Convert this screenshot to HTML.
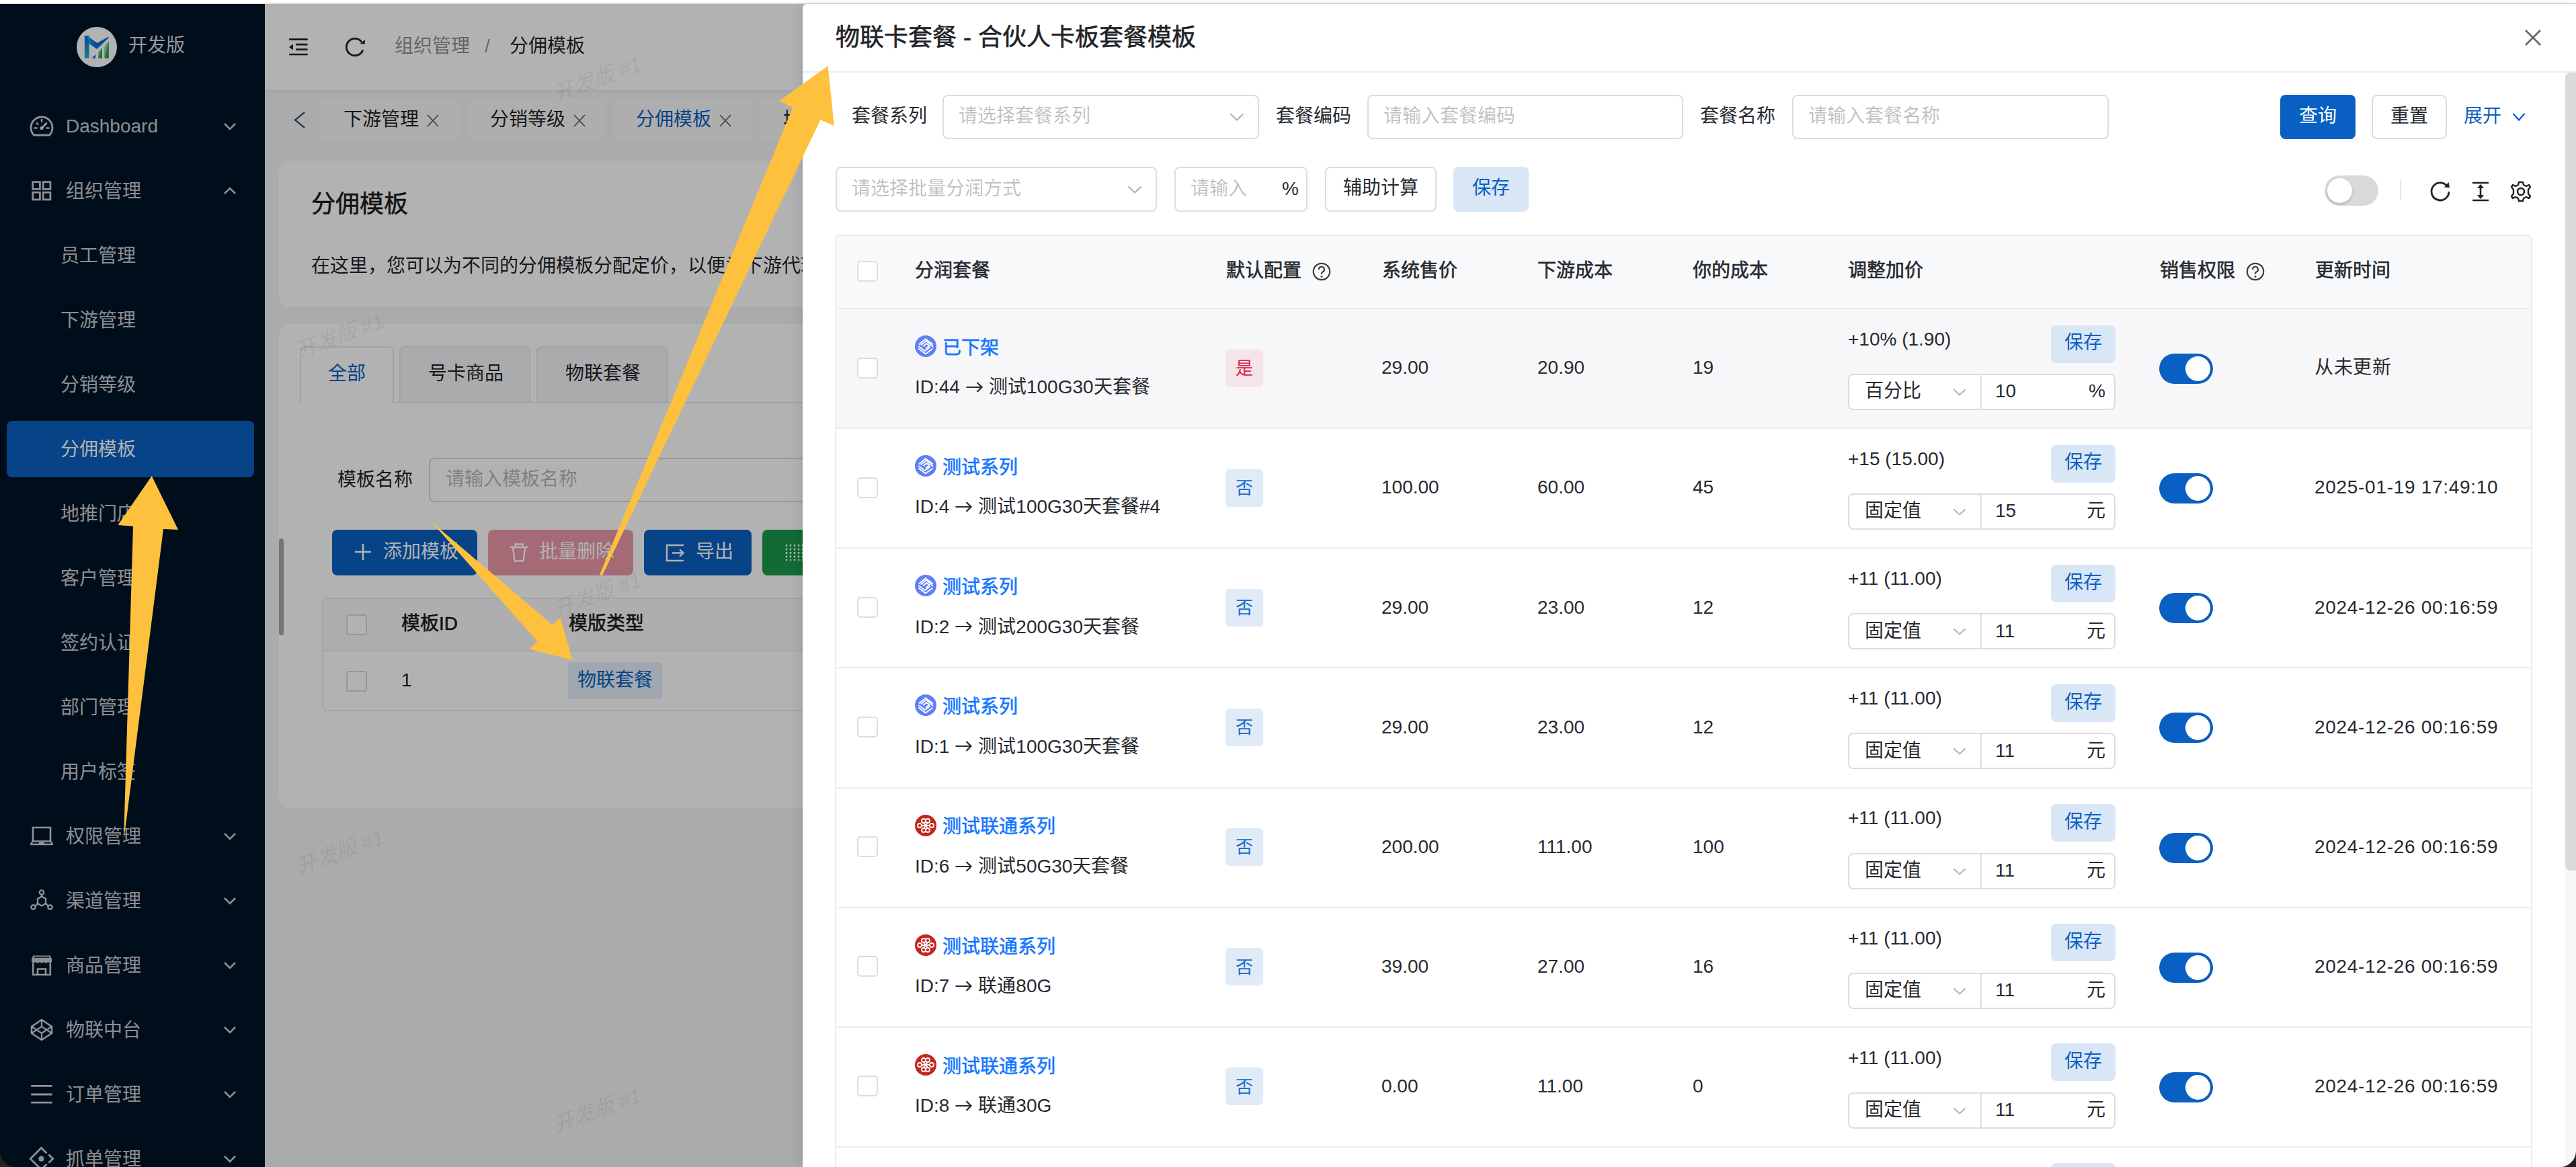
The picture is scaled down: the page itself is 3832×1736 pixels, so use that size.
<!DOCTYPE html><html lang="zh-CN"><head><meta charset="utf-8"><style>
html,body{margin:0;padding:0}
body{width:3832px;height:1736px;overflow:hidden;position:relative;background:#fff;font-family:"Liberation Sans",sans-serif}
.t{position:absolute;white-space:nowrap}
.r{position:absolute;box-sizing:border-box}
svg{position:absolute;overflow:visible}
</style></head><body>
<div class="r" style="left:0px;top:0px;width:3832px;height:4px;background:#ffffff;"></div>
<div class="r" style="left:0px;top:4px;width:3832px;height:2px;background:#e4e5e3;"></div>
<div class="r" style="left:0px;top:6px;width:394px;height:1730px;background:#001529;"></div>
<svg style="left:114px;top:40px" width="60" height="60" viewBox="0 0 60 60"><defs><linearGradient id="lg1" x1="0" y1="0" x2="0" y2="1"><stop offset="0" stop-color="#0e6ad8"/><stop offset="1" stop-color="#12b8e0"/></linearGradient><linearGradient id="lg2" x1="0" y1="0" x2="1" y2="0"><stop offset="0" stop-color="#12b0e0"/><stop offset="0.35" stop-color="#0e70dc"/><stop offset="1" stop-color="#0e6ad8"/></linearGradient></defs><circle cx="30" cy="30" r="30" fill="#ffffff"/><rect x="11.9" y="13.1" width="6.6" height="33.6" rx="0.8" fill="url(#lg1)"/><path d="M15.5 13.1 L30.5 24 L48 14.2 L47.2 16.8 L30 33 L18.5 24.8 Z" fill="url(#lg2)"/><path d="M22.7 46.4 L28.1 41 L28.1 46.4 Z" fill="#0e6ad8"/><path d="M32 46.7 V38 L38 31 V46.7 Z" fill="#3a9a5e"/><path d="M32 38 L38 31 L32 46.7 Z" fill="#8ad48a"/><path d="M41.6 46.7 V30 L47.9 21.2 V46.7 Z" fill="#3a9a5e"/><path d="M41.6 30 L47.9 21.2 L41.6 46.7 Z" fill="#8ad48a"/></svg>
<div class="t" style="left:191px;top:48.3px;font-size:28px;line-height:39px;color:rgba(255,255,255,0.85);font-weight:400;">开发版</div>
<div class="r" style="left:10px;top:626px;width:368px;height:84px;background:#0a60c2;border-radius:8px"></div>
<svg style="left:44px;top:170px" width="36" height="36" viewBox="0 0 36 36"><path d="M6.4 31 A16 16 0 1 1 29.6 31 Z" fill="none" stroke="rgba(255,255,255,0.8)" stroke-width="2.8" stroke-linejoin="round"/><path d="M18 20.5 L24 14.5" stroke="rgba(255,255,255,0.8)" stroke-width="2.6" stroke-linecap="round"/><circle cx="18" cy="20.5" r="2.6" fill="rgba(255,255,255,0.8)"/><path d="M18 8v3M7.5 20.5h3M25.5 20.5h3M10.8 13.2l1.8 1.8M25.2 13.2l-1.8 1.8" stroke="rgba(255,255,255,0.8)" stroke-width="2.4" stroke-linecap="round"/></svg>
<div class="t" style="left:98px;top:168.3px;font-size:28px;line-height:39px;color:rgba(255,255,255,0.8);font-weight:400;">Dashboard</div>
<svg style="left:332px;top:182px" width="20" height="12" viewBox="0 0 20 12"><path d="M2 2 L10 10 L18 2" fill="none" stroke="rgba(255,255,255,0.8)" stroke-width="2.5"/></svg>
<svg style="left:44px;top:266px" width="36" height="36" viewBox="0 0 36 36"><rect x="4.7" y="4.7" width="10.7" height="10.7" fill="none" stroke="rgba(255,255,255,0.8)" stroke-width="2.8"/><rect x="20.2" y="4.7" width="10.7" height="10.7" fill="none" stroke="rgba(255,255,255,0.8)" stroke-width="2.8"/><rect x="4.7" y="20.2" width="10.7" height="10.7" fill="none" stroke="rgba(255,255,255,0.8)" stroke-width="2.8"/><rect x="20.2" y="20.2" width="10.7" height="10.7" fill="none" stroke="rgba(255,255,255,0.8)" stroke-width="2.8"/></svg>
<div class="t" style="left:98px;top:265.3px;font-size:28px;line-height:39px;color:rgba(255,255,255,0.8);font-weight:400;">组织管理</div>
<svg style="left:332px;top:278px" width="20" height="12" viewBox="0 0 20 12"><path d="M2 10 L10 2 L18 10" fill="none" stroke="rgba(255,255,255,0.8)" stroke-width="2.5"/></svg>
<div class="t" style="left:90px;top:361.3px;font-size:28px;line-height:39px;color:rgba(255,255,255,0.8);font-weight:400;">员工管理</div>
<div class="t" style="left:90px;top:457.3px;font-size:28px;line-height:39px;color:rgba(255,255,255,0.8);font-weight:400;">下游管理</div>
<div class="t" style="left:90px;top:553.3px;font-size:28px;line-height:39px;color:rgba(255,255,255,0.8);font-weight:400;">分销等级</div>
<div class="t" style="left:90px;top:649.3px;font-size:28px;line-height:39px;color:#fff;font-weight:400;">分佣模板</div>
<div class="t" style="left:90px;top:745.3px;font-size:28px;line-height:39px;color:rgba(255,255,255,0.8);font-weight:400;">地推门店</div>
<div class="t" style="left:90px;top:841.3px;font-size:28px;line-height:39px;color:rgba(255,255,255,0.8);font-weight:400;">客户管理</div>
<div class="t" style="left:90px;top:937.3px;font-size:28px;line-height:39px;color:rgba(255,255,255,0.8);font-weight:400;">签约认证</div>
<div class="t" style="left:90px;top:1033.3px;font-size:28px;line-height:39px;color:rgba(255,255,255,0.8);font-weight:400;">部门管理</div>
<div class="t" style="left:90px;top:1129.3px;font-size:28px;line-height:39px;color:rgba(255,255,255,0.8);font-weight:400;">用户标签</div>
<svg style="left:44px;top:1226px" width="36" height="36" viewBox="0 0 36 36"><path d="M5 25 V5 H31 V25" fill="none" stroke="rgba(255,255,255,0.8)" stroke-width="2.6"/><path d="M2 30 L4.5 25.5 H31.5 L34 30 Z" fill="none" stroke="rgba(255,255,255,0.8)" stroke-width="2.4" stroke-linejoin="round"/><path d="M14 28 h8" stroke="rgba(255,255,255,0.8)" stroke-width="2"/></svg>
<div class="t" style="left:98px;top:1225.3px;font-size:28px;line-height:39px;color:rgba(255,255,255,0.8);font-weight:400;">权限管理</div>
<svg style="left:332px;top:1238px" width="20" height="12" viewBox="0 0 20 12"><path d="M2 2 L10 10 L18 2" fill="none" stroke="rgba(255,255,255,0.8)" stroke-width="2.5"/></svg>
<svg style="left:44px;top:1322px" width="36" height="36" viewBox="0 0 36 36"><circle cx="18" cy="5.5" r="3.2" fill="none" stroke="rgba(255,255,255,0.8)" stroke-width="2.3"/><circle cx="5.5" cy="27.5" r="3.2" fill="none" stroke="rgba(255,255,255,0.8)" stroke-width="2.3"/><circle cx="30.5" cy="27.5" r="3.2" fill="none" stroke="rgba(255,255,255,0.8)" stroke-width="2.3"/><path d="M18 11.5 L24 15 V22 L18 25.5 L12 22 V15 Z" fill="none" stroke="rgba(255,255,255,0.8)" stroke-width="2.3"/><path d="M18 8.7 V11.5 M8.3 25.8 L12 22 M27.7 25.8 L24 22" stroke="rgba(255,255,255,0.8)" stroke-width="2.3"/></svg>
<div class="t" style="left:98px;top:1321.3px;font-size:28px;line-height:39px;color:rgba(255,255,255,0.8);font-weight:400;">渠道管理</div>
<svg style="left:332px;top:1334px" width="20" height="12" viewBox="0 0 20 12"><path d="M2 2 L10 10 L18 2" fill="none" stroke="rgba(255,255,255,0.8)" stroke-width="2.5"/></svg>
<svg style="left:44px;top:1418px" width="36" height="36" viewBox="0 0 36 36"><path d="M5 3.5 H31 L33 9 V13 Q30.5 16 27.5 13 Q24 16 21 13 Q18 16 15 13 Q12 16 8.5 13 Q5.5 16 3 13 V9 Z" fill="rgba(255,255,255,0.8)"/><path d="M5.2 15 V32 H30.8 V15" fill="none" stroke="rgba(255,255,255,0.8)" stroke-width="2.6"/><path d="M12 32 V23.5 H24 V32" fill="none" stroke="rgba(255,255,255,0.8)" stroke-width="2.6"/><path d="M6.5 6 H29.5" stroke="#001529" stroke-width="1.6"/></svg>
<div class="t" style="left:98px;top:1417.3px;font-size:28px;line-height:39px;color:rgba(255,255,255,0.8);font-weight:400;">商品管理</div>
<svg style="left:332px;top:1430px" width="20" height="12" viewBox="0 0 20 12"><path d="M2 2 L10 10 L18 2" fill="none" stroke="rgba(255,255,255,0.8)" stroke-width="2.5"/></svg>
<svg style="left:44px;top:1514px" width="36" height="36" viewBox="0 0 36 36"><path d="M18 3 L33 13 V23 L18 33 L3 23 V13 Z" fill="none" stroke="rgba(255,255,255,0.8)" stroke-width="2.6" stroke-linejoin="round"/><path d="M3 13 L18 23 L33 13 M3 23 L18 13 L33 23 M18 3 V13 M18 23 V33" fill="none" stroke="rgba(255,255,255,0.8)" stroke-width="2.2"/></svg>
<div class="t" style="left:98px;top:1513.3px;font-size:28px;line-height:39px;color:rgba(255,255,255,0.8);font-weight:400;">物联中台</div>
<svg style="left:332px;top:1526px" width="20" height="12" viewBox="0 0 20 12"><path d="M2 2 L10 10 L18 2" fill="none" stroke="rgba(255,255,255,0.8)" stroke-width="2.5"/></svg>
<svg style="left:44px;top:1610px" width="36" height="36" viewBox="0 0 36 36"><path d="M2.2 5.4 H33.6 M2.2 18 H33.6 M2.2 30.1 H33.6" stroke="rgba(255,255,255,0.8)" stroke-width="2.8"/></svg>
<div class="t" style="left:98px;top:1609.3px;font-size:28px;line-height:39px;color:rgba(255,255,255,0.8);font-weight:400;">订单管理</div>
<svg style="left:332px;top:1622px" width="20" height="12" viewBox="0 0 20 12"><path d="M2 2 L10 10 L18 2" fill="none" stroke="rgba(255,255,255,0.8)" stroke-width="2.5"/></svg>
<svg style="left:44px;top:1706px" width="36" height="36" viewBox="0 0 36 36"><path d="M25.5 9.6 L17.4 1.5 L1.2 17.7 L17.4 33.9 L25.5 25.8 M28.5 11.6 L34.6 17.7 L28.5 23.8" fill="none" stroke="rgba(255,255,255,0.8)" stroke-width="2.8" stroke-linejoin="miter"/><circle cx="17.4" cy="17.7" r="4" fill="rgba(255,255,255,0.8)"/></svg>
<div class="t" style="left:98px;top:1705.3px;font-size:28px;line-height:39px;color:rgba(255,255,255,0.8);font-weight:400;">抓单管理</div>
<svg style="left:332px;top:1718px" width="20" height="12" viewBox="0 0 20 12"><path d="M2 2 L10 10 L18 2" fill="none" stroke="rgba(255,255,255,0.8)" stroke-width="2.5"/></svg>
<div class="r" style="left:394px;top:6px;width:3438px;height:1730px;background:#f4f5f8;"></div>
<div class="r" style="left:394px;top:6px;width:3438px;height:128px;background:#ffffff;box-shadow:0 1px 4px rgba(0,21,41,0.08)"></div>
<svg style="left:429px;top:57px" width="30" height="26" viewBox="0 0 30 26"><path d="M1.1 1.7 H28.8 M11.3 9.2 H28.5 M11.3 16.7 H28.5 M1.1 24 H28.8" stroke="#1f2126" stroke-width="2.7"/><path d="M1 13 L7 8.6 V17.4 Z" fill="#1f2126"/></svg>
<svg style="left:513px;top:55px" width="30" height="30" viewBox="0 0 30 30"><path d="M26.4 20.3 A12.6 12.6 0 1 1 24.5 6.8" fill="none" stroke="#1f2126" stroke-width="2.8" stroke-linecap="round"/><path d="M29.8 4.2 V10.8 L22.8 9.8 Z" fill="#1f2126"/></svg>
<div class="t" style="left:587px;top:49.3px;font-size:28px;line-height:39px;color:rgba(0,0,0,0.45);font-weight:400;">组织管理</div>
<div class="t" style="left:721px;top:49.3px;font-size:28px;line-height:39px;color:rgba(0,0,0,0.45);font-weight:400;">/</div>
<div class="t" style="left:758px;top:49.3px;font-size:28px;line-height:39px;color:rgba(0,0,0,0.88);font-weight:400;">分佣模板</div>
<svg style="left:437px;top:166px" width="18" height="25" viewBox="0 0 18 25"><path d="M16 1 L2 12.5 L16 24" fill="none" stroke="#2b3a55" stroke-width="2.1"/></svg>
<div class="r" style="left:478px;top:146px;width:205px;height:64px;background:#fafafa;border-radius:12px"></div>
<div class="t" style="left:511px;top:158.3px;font-size:28px;line-height:39px;color:rgba(0,0,0,0.88);font-weight:400;">下游管理</div>
<svg style="left:635px;top:170px" width="18" height="19" viewBox="0 0 18 19"><path d="M1 1 L17 18 M17 1 L1 18" stroke="#5a6270" stroke-width="1.8"/></svg>
<div class="r" style="left:696px;top:146px;width:205px;height:64px;background:#fafafa;border-radius:12px"></div>
<div class="t" style="left:729px;top:158.3px;font-size:28px;line-height:39px;color:rgba(0,0,0,0.88);font-weight:400;">分销等级</div>
<svg style="left:853px;top:170px" width="18" height="19" viewBox="0 0 18 19"><path d="M1 1 L17 18 M17 1 L1 18" stroke="#5a6270" stroke-width="1.8"/></svg>
<div class="r" style="left:913px;top:146px;width:206px;height:64px;background:#fafafa;border-radius:12px"></div>
<div class="t" style="left:946px;top:158.3px;font-size:28px;line-height:39px;color:#0a60c2;font-weight:400;">分佣模板</div>
<svg style="left:1070px;top:170px" width="18" height="19" viewBox="0 0 18 19"><path d="M1 1 L17 18 M17 1 L1 18" stroke="#5a6270" stroke-width="1.8"/></svg>
<div class="r" style="left:1132px;top:146px;width:206px;height:64px;background:#fafafa;border-radius:12px"></div>
<div class="t" style="left:1165px;top:158.3px;font-size:28px;line-height:39px;color:rgba(0,0,0,0.88);font-weight:400;">地推门店</div>
<svg style="left:1289px;top:170px" width="18" height="19" viewBox="0 0 18 19"><path d="M1 1 L17 18 M17 1 L1 18" stroke="#5a6270" stroke-width="1.8"/></svg>
<div class="r" style="left:415px;top:239px;width:3400px;height:218px;background:#ffffff;border-radius:16px"></div>
<div class="t" style="left:463px;top:278.8px;font-size:36px;line-height:50px;color:rgba(0,0,0,0.88);font-weight:400;;-webkit-text-stroke:0.6px rgba(0,0,0,0.88)">分佣模板</div>
<div class="t" style="left:463px;top:375.8px;font-size:28px;line-height:39px;color:rgba(0,0,0,0.88);font-weight:400;">在这里，您可以为不同的分佣模板分配定价，以便为下游代理商设置不同的价格。</div>
<div class="r" style="left:415px;top:482px;width:3400px;height:720px;background:#ffffff;border-radius:16px"></div>
<div class="r" style="left:446px;top:598px;width:3330px;height:2px;background:#e6e8ee;"></div>
<div class="r" style="left:446px;top:515px;width:140px;height:85px;background:#ffffff;border:2px solid #e6e8ee;border-bottom:none;border-radius:8px 8px 0 0"></div>
<div class="t" style="left:488px;top:536.3px;font-size:28px;line-height:39px;color:#0a60c2;font-weight:400;">全部</div>
<div class="r" style="left:594px;top:515px;width:195px;height:83px;background:#f4f5f8;border:2px solid #e6e8ee;border-bottom:none;border-radius:8px 8px 0 0"></div>
<div class="t" style="left:637px;top:536.3px;font-size:28px;line-height:39px;color:rgba(0,0,0,0.88);font-weight:400;">号卡商品</div>
<div class="r" style="left:798px;top:515px;width:195px;height:83px;background:#f4f5f8;border:2px solid #e6e8ee;border-bottom:none;border-radius:8px 8px 0 0"></div>
<div class="t" style="left:841px;top:536.3px;font-size:28px;line-height:39px;color:rgba(0,0,0,0.88);font-weight:400;">物联套餐</div>
<div class="t" style="left:502px;top:694.3px;font-size:28px;line-height:39px;color:rgba(0,0,0,0.88);font-weight:400;">模板名称</div>
<div class="r" style="left:638px;top:681px;width:800px;height:66px;background:#fff;border:2px solid #d9d9d9;border-radius:8px"></div>
<div class="t" style="left:663px;top:693.3px;font-size:28px;line-height:39px;color:rgba(0,0,0,0.3);font-weight:400;">请输入模板名称</div>
<div class="r" style="left:494px;top:788px;width:216px;height:68px;background:#0a60c2;border-radius:8px"></div>
<svg style="left:527px;top:808px" width="26" height="26" viewBox="0 0 26 26"><path d="M13 1 V25 M1 13 H25" stroke="#fff" stroke-width="2.6"/></svg>
<div class="t" style="left:570px;top:801.3px;font-size:28px;line-height:39px;color:#fff;font-weight:400;">添加模板</div>
<div class="r" style="left:726px;top:788px;width:216px;height:68px;background:#eb9aa9;border-radius:8px"></div>
<svg style="left:756px;top:807px" width="32" height="30" viewBox="0 0 32 30"><path d="M2.5 7 H29.5 M10.5 7 V2.5 H21.5 V7 M7 7 L9.5 27.5 H22.5 L25 7" fill="none" stroke="#fff" stroke-width="2.4" stroke-linejoin="round"/></svg>
<div class="t" style="left:802px;top:801.3px;font-size:28px;line-height:39px;color:#fff;font-weight:400;">批量删除</div>
<div class="r" style="left:958px;top:788px;width:160px;height:68px;background:#0a60c2;border-radius:8px"></div>
<svg style="left:990px;top:809px" width="30" height="27" viewBox="0 0 30 27"><path d="M27 2 H2 V25 H27 M10 13.5 H26 M21 8.5 L26.5 13.5 L21 18.5" fill="none" stroke="#fff" stroke-width="2.4"/></svg>
<div class="t" style="left:1035px;top:801.3px;font-size:28px;line-height:39px;color:#fff;font-weight:400;">导出</div>
<div class="r" style="left:1134px;top:788px;width:200px;height:68px;background:#1a9a4c;border-radius:8px"></div>
<svg style="left:1167px;top:807px" width="30" height="30" viewBox="0 0 30 30"><path d="M3 3 V27 M9 3 V27 M15 3 V27 M21 3 V27 M27 3 V27" stroke="#fff" stroke-width="2.4" stroke-dasharray="3 2.5"/></svg>
<div class="r" style="left:479px;top:889px;width:3300px;height:169px;background:#fff;border:2px solid #ececec;border-radius:8px"></div>
<div class="r" style="left:481px;top:891px;width:3296px;height:77px;background:#fafafa;border-radius:6px 6px 0 0"></div>
<div class="r" style="left:479px;top:967px;width:3300px;height:2px;background:#ececec;"></div>
<div class="r" style="left:515px;top:914px;width:31px;height:31px;background:#fff;border:2px solid #d9d9d9;border-radius:4px"></div>
<div class="r" style="left:515px;top:998px;width:31px;height:31px;background:#fff;border:2px solid #d9d9d9;border-radius:4px"></div>
<div class="t" style="left:597px;top:908.3px;font-size:28px;line-height:39px;color:rgba(0,0,0,0.88);font-weight:400;;-webkit-text-stroke:0.6px rgba(0,0,0,0.88)">模板ID</div>
<div class="t" style="left:846px;top:908.3px;font-size:28px;line-height:39px;color:rgba(0,0,0,0.88);font-weight:400;;-webkit-text-stroke:0.6px rgba(0,0,0,0.88)">模版类型</div>
<div class="t" style="left:597px;top:992.3px;font-size:28px;line-height:39px;color:rgba(0,0,0,0.88);font-weight:400;">1</div>
<div class="r" style="left:845px;top:985px;width:140px;height:55px;background:#e6f0fb;border-radius:4px"></div>
<div class="t" style="left:859px;top:992.3px;font-size:28px;line-height:39px;color:#0a60c2;font-weight:400;">物联套餐</div>
<div class="r" style="left:415px;top:801px;width:7px;height:144px;background:rgba(0,0,0,0.35);border-radius:4px"></div>
<div class="t" style="left:809px;top:100px;width:160px;text-align:center;font-size:31px;line-height:36px;color:rgba(0,0,0,0.08);font-style:italic;transform:rotate(-20deg)">开发版 #1</div>
<div class="t" style="left:426px;top:482px;width:160px;text-align:center;font-size:31px;line-height:36px;color:rgba(0,0,0,0.08);font-style:italic;transform:rotate(-20deg)">开发版 #1</div>
<div class="t" style="left:809px;top:867px;width:160px;text-align:center;font-size:31px;line-height:36px;color:rgba(0,0,0,0.08);font-style:italic;transform:rotate(-20deg)">开发版 #1</div>
<div class="t" style="left:426px;top:1250px;width:160px;text-align:center;font-size:31px;line-height:36px;color:rgba(0,0,0,0.08);font-style:italic;transform:rotate(-20deg)">开发版 #1</div>
<div class="t" style="left:809px;top:1634px;width:160px;text-align:center;font-size:31px;line-height:36px;color:rgba(0,0,0,0.08);font-style:italic;transform:rotate(-20deg)">开发版 #1</div>
<div class="t" style="left:1192px;top:482px;width:160px;text-align:center;font-size:31px;line-height:36px;color:rgba(0,0,0,0.08);font-style:italic;transform:rotate(-20deg)">开发版 #1</div>
<div class="t" style="left:1192px;top:1250px;width:160px;text-align:center;font-size:31px;line-height:36px;color:rgba(0,0,0,0.08);font-style:italic;transform:rotate(-20deg)">开发版 #1</div>
<div class="r" style="left:0px;top:6px;width:3832px;height:1730px;background:rgba(0,0,0,0.3);"></div>
<div class="r" style="left:1194px;top:6px;width:2638px;height:1730px;background:#ffffff;border-top-left-radius:6px;box-shadow:-6px 0 16px rgba(0,0,0,0.08)"></div>
<div class="t" style="left:1243px;top:31.3px;font-size:36px;line-height:50px;color:#1f2329;font-weight:400;;-webkit-text-stroke:0.6px #1f2329">物联卡套餐 - 合伙人卡板套餐模板</div>
<svg style="left:3756px;top:44px" width="24" height="24" viewBox="0 0 24 24"><path d="M1 1 L23 23 M23 1 L1 23" stroke="rgba(0,0,0,0.6)" stroke-width="2.6"/></svg>
<div class="r" style="left:1194px;top:106px;width:2638px;height:2px;background:#ebebf2;"></div>
<div class="r" style="left:3816px;top:108px;width:16px;height:1628px;background:#f7f7f7;"></div>
<div class="r" style="left:3816px;top:108px;width:24px;height:1187px;background:#dadada;border-radius:8px"></div>
<div class="t" style="left:1267px;top:153.3px;font-size:28px;line-height:39px;color:#272a30;font-weight:400;">套餐系列</div>
<div class="r" style="left:1402px;top:141px;width:471px;height:66px;background:#fff;border:2px solid #dcdde3;border-radius:8px"></div>
<div class="t" style="left:1426px;top:153.3px;font-size:28px;line-height:39px;color:rgba(0,0,0,0.25);font-weight:400;">请选择套餐系列</div>
<svg style="left:1829px;top:168.0px" width="22" height="12" viewBox="0 0 22 12"><path d="M1.5 1.5 L11 10.5 L20.5 1.5" fill="none" stroke="rgba(0,0,0,0.3)" stroke-width="2.2"/></svg>
<div class="t" style="left:1898px;top:153.3px;font-size:28px;line-height:39px;color:#272a30;font-weight:400;">套餐编码</div>
<div class="r" style="left:2034px;top:141px;width:470px;height:66px;background:#fff;border:2px solid #dcdde3;border-radius:8px"></div>
<div class="t" style="left:2058px;top:153.3px;font-size:28px;line-height:39px;color:rgba(0,0,0,0.25);font-weight:400;">请输入套餐编码</div>
<div class="t" style="left:2529px;top:153.3px;font-size:28px;line-height:39px;color:#272a30;font-weight:400;">套餐名称</div>
<div class="r" style="left:2666px;top:141px;width:471px;height:66px;background:#fff;border:2px solid #dcdde3;border-radius:8px"></div>
<div class="t" style="left:2690px;top:153.3px;font-size:28px;line-height:39px;color:rgba(0,0,0,0.25);font-weight:400;">请输入套餐名称</div>
<div class="r" style="left:3392px;top:141px;width:112px;height:66px;background:#0a60c2;border-radius:8px"></div>
<div class="t" style="left:3420px;top:153.3px;font-size:28px;line-height:39px;color:#fff;font-weight:400;">查询</div>
<div class="r" style="left:3528px;top:141px;width:112px;height:66px;background:#fff;border:2px solid #dcdde3;border-radius:8px"></div>
<div class="t" style="left:3556px;top:153.3px;font-size:28px;line-height:39px;color:#272a30;font-weight:400;">重置</div>
<div class="t" style="left:3665px;top:153.3px;font-size:28px;line-height:39px;color:#0a60c2;font-weight:400;">展开</div>
<svg style="left:3737px;top:167px" width="20" height="14" viewBox="0 0 20 14"><path d="M1.5 2 L10 11.5 L18.5 2" fill="none" stroke="#0a60c2" stroke-width="2.4"/></svg>
<div class="r" style="left:1243px;top:248px;width:478px;height:67px;background:#fff;border:2px solid #dcdde3;border-radius:8px"></div>
<div class="t" style="left:1267px;top:260.8px;font-size:28px;line-height:39px;color:rgba(0,0,0,0.25);font-weight:400;">请选择批量分润方式</div>
<svg style="left:1677px;top:275.5px" width="22" height="12" viewBox="0 0 22 12"><path d="M1.5 1.5 L11 10.5 L20.5 1.5" fill="none" stroke="rgba(0,0,0,0.3)" stroke-width="2.2"/></svg>
<div class="r" style="left:1747px;top:248px;width:198px;height:67px;background:#fff;border:2px solid #dcdde3;border-radius:8px"></div>
<div class="t" style="left:1771px;top:260.8px;font-size:28px;line-height:39px;color:rgba(0,0,0,0.25);font-weight:400;">请输入</div>
<div class="t" style="left:1907px;top:260.8px;font-size:28px;line-height:39px;color:#272a30;font-weight:400;">%</div>
<div class="r" style="left:1971px;top:248px;width:166px;height:67px;background:#fff;border:2px solid #dcdde3;border-radius:8px"></div>
<div class="t" style="left:1998px;top:260.3px;font-size:28px;line-height:39px;color:#272a30;font-weight:400;">辅助计算</div>
<div class="r" style="left:2162px;top:248px;width:112px;height:67px;background:#d9e6f6;border-radius:8px"></div>
<div class="t" style="left:2190px;top:260.3px;font-size:28px;line-height:39px;color:#0a60c2;font-weight:400;">保存</div>
<div class="r" style="left:3458px;top:261px;width:80px;height:45px;background:rgba(0,0,0,0.15);border-radius:23px"></div>
<div class="r" style="left:3462px;top:265px;width:37px;height:37px;border-radius:50%;background:#fff;box-shadow:0 2px 4px rgba(0,35,11,0.2)"></div>
<div class="r" style="left:3570px;top:267px;width:2px;height:30px;background:#e8e8e8;"></div>
<svg style="left:3614px;top:269px" width="32" height="32" viewBox="0 0 32 32"><path d="M27 9 A13 13 0 1 0 29 16" fill="none" stroke="#222" stroke-width="2.8"/><path d="M22 9.5 L30 10 L28.5 2 Z" fill="#222"/></svg>
<svg style="left:3676px;top:270px" width="28" height="30" viewBox="0 0 28 30"><path d="M2 2 H26 M2 28 H26 M14 5 V25" stroke="#222" stroke-width="2.6"/><path d="M14 4 L9 10 H19 Z M14 26 L9 20 H19 Z" fill="#222"/></svg>
<svg style="left:3734px;top:269px" width="32" height="32" viewBox="0 0 32 32"><path d="M16 2 L19 2 L20 6 L24 8 L28 6 L30 9 L27 13 L27 19 L30 23 L28 26 L24 24 L20 26 L19 30 L13 30 L12 26 L8 24 L4 26 L2 23 L5 19 L5 13 L2 9 L4 6 L8 8 L12 6 L13 2 Z" fill="none" stroke="#222" stroke-width="2.4" stroke-linejoin="round"/><circle cx="16" cy="16" r="5" fill="none" stroke="#222" stroke-width="2.6"/></svg>
<div class="r" style="left:1242px;top:349px;width:2525px;height:1387px;background:#fff;border:2px solid #ebebf2;border-bottom:none;border-radius:8px 8px 0 0"></div>
<div class="r" style="left:1244px;top:351px;width:2521px;height:107px;background:#f8f9fb;border-radius:6px 6px 0 0"></div>
<div class="r" style="left:1242px;top:458px;width:2525px;height:2px;background:#ebebf2;"></div>
<div class="r" style="left:1275px;top:388px;width:31px;height:31px;background:#fff;border:2px solid #dcdde3;border-radius:5px"></div>
<div class="t" style="left:1361px;top:383.3px;font-size:28px;line-height:39px;color:#272a30;font-weight:400;;-webkit-text-stroke:0.6px #272a30">分润套餐</div>
<div class="t" style="left:1824px;top:383.3px;font-size:28px;line-height:39px;color:#272a30;font-weight:400;;-webkit-text-stroke:0.6px #272a30">默认配置</div>
<svg style="left:1952px;top:390px" width="28" height="28" viewBox="0 0 28 28"><circle cx="14" cy="14" r="12.2" fill="none" stroke="rgba(0,0,0,0.75)" stroke-width="2.2"/><path d="M10 11 A4 4 0 1 1 15.5 14.5 Q14 15.2 14 17 V18" fill="none" stroke="rgba(0,0,0,0.75)" stroke-width="2.2"/><circle cx="14" cy="21.5" r="1.5" fill="rgba(0,0,0,0.75)"/></svg>
<div class="t" style="left:2056px;top:383.3px;font-size:28px;line-height:39px;color:#272a30;font-weight:400;;-webkit-text-stroke:0.6px #272a30">系统售价</div>
<div class="t" style="left:2287px;top:383.3px;font-size:28px;line-height:39px;color:#272a30;font-weight:400;;-webkit-text-stroke:0.6px #272a30">下游成本</div>
<div class="t" style="left:2518px;top:383.3px;font-size:28px;line-height:39px;color:#272a30;font-weight:400;;-webkit-text-stroke:0.6px #272a30">你的成本</div>
<div class="t" style="left:2749px;top:383.3px;font-size:28px;line-height:39px;color:#272a30;font-weight:400;;-webkit-text-stroke:0.6px #272a30">调整加价</div>
<div class="t" style="left:3213px;top:383.3px;font-size:28px;line-height:39px;color:#272a30;font-weight:400;;-webkit-text-stroke:0.6px #272a30">销售权限</div>
<svg style="left:3341px;top:390px" width="28" height="28" viewBox="0 0 28 28"><circle cx="14" cy="14" r="12.2" fill="none" stroke="rgba(0,0,0,0.75)" stroke-width="2.2"/><path d="M10 11 A4 4 0 1 1 15.5 14.5 Q14 15.2 14 17 V18" fill="none" stroke="rgba(0,0,0,0.75)" stroke-width="2.2"/><circle cx="14" cy="21.5" r="1.5" fill="rgba(0,0,0,0.75)"/></svg>
<div class="t" style="left:3444px;top:383.3px;font-size:28px;line-height:39px;color:#272a30;font-weight:400;;-webkit-text-stroke:0.6px #272a30">更新时间</div>
<div class="r" style="left:1244px;top:460px;width:2521px;height:176px;background:#f7f7f9;"></div>
<div class="r" style="left:1244px;top:636px;width:2521px;height:2px;background:#ebebf2;"></div>
<div class="r" style="left:1275px;top:532px;width:31px;height:31px;background:#fff;border:2px solid #dcdde3;border-radius:5px"></div>
<svg style="left:1361px;top:499.0px" width="32" height="32" viewBox="0 0 32 32"><circle cx="16" cy="16" r="16" fill="#5f7ff5"/><g fill="none" stroke="#fff" stroke-width="1.9" stroke-linejoin="round"><path d="M5.9 13.4 L15.8 5.3 L26.9 13.4"/><path d="M8.8 14.5 L17 7.8 L26.9 17"/><path d="M12.3 16.3 L17.3 12 L21.5 15.5 L16 19.5"/><path d="M5.3 16 L14.8 23 L22.8 17.3"/><path d="M5.3 19.5 L15.8 27.4 L26.3 19.8"/></g></svg>
<div class="t" style="left:1402px;top:497.8px;font-size:28px;line-height:39px;color:#1677ff;font-weight:400;;-webkit-text-stroke:0.6px #1677ff">已下架</div>
<div class="t" style="left:1361px;top:556.3px;font-size:28px;line-height:39px;color:#272a30;font-weight:400;">ID:44<svg width="25" height="16" viewBox="0 0 25 16" style="position:relative;display:inline-block;vertical-align:middle;top:-2px;margin:0 9px 0 9px"><path d="M0.5 8 H23.5 M16.5 1 L23.5 8 L16.5 15" fill="none" stroke="#272a30" stroke-width="2.2"/></svg>测试100G30天套餐</div>
<div class="r" style="left:1823px;top:520px;width:56px;height:56px;background:#f5e4ea;border-radius:6px"></div>
<div class="t" style="left:1823px;top:529.8px;font-size:26px;line-height:36px;color:#d4244a;font-weight:400;width:56px;text-align:center">是</div>
<div class="t" style="left:2055px;top:527.3px;font-size:28px;line-height:39px;color:#272a30;font-weight:400;">29.00</div>
<div class="t" style="left:2287px;top:527.3px;font-size:28px;line-height:39px;color:#272a30;font-weight:400;">20.90</div>
<div class="t" style="left:2518px;top:527.3px;font-size:28px;line-height:39px;color:#272a30;font-weight:400;">19</div>
<div class="t" style="left:2749px;top:484.8px;font-size:28px;line-height:39px;color:#272a30;font-weight:400;">+10% (1.90)</div>
<div class="r" style="left:3051px;top:484px;width:96px;height:56px;background:#d9e6f6;border-radius:8px"></div>
<div class="t" style="left:3071px;top:490.3px;font-size:28px;line-height:39px;color:#0a60c2;font-weight:400;">保存</div>
<div class="r" style="left:2749px;top:556px;width:398px;height:54px;background:#fff;border:2px solid #dcdde3;border-radius:8px"></div>
<div class="r" style="left:2946px;top:556px;width:2px;height:54px;background:#dcdde3;"></div>
<div class="t" style="left:2774px;top:562.3px;font-size:28px;line-height:39px;color:#272a30;font-weight:400;">百分比</div>
<svg style="left:2905px;top:578.0px" width="20" height="11" viewBox="0 0 20 11"><path d="M1.5 1.5 L10 9.5 L18.5 1.5" fill="none" stroke="rgba(0,0,0,0.3)" stroke-width="2"/></svg>
<div class="t" style="left:2968px;top:562.3px;font-size:28px;line-height:39px;color:#272a30;font-weight:400;">10</div>
<div class="t" style="left:3107px;top:562.3px;font-size:28px;line-height:39px;color:#272a30;font-weight:400;">%</div>
<div class="r" style="left:3212px;top:526px;width:80px;height:45px;background:#0a60c2;border-radius:23px"></div>
<div class="r" style="left:3251px;top:530.0px;width:37px;height:37px;border-radius:50%;background:#fff"></div>
<div class="t" style="left:3443px;top:527.3px;font-size:28px;line-height:39px;color:#272a30;font-weight:400;letter-spacing:0.7px">从未更新</div>
<div class="r" style="left:1244px;top:814px;width:2521px;height:2px;background:#ebebf2;"></div>
<div class="r" style="left:1275px;top:710px;width:31px;height:31px;background:#fff;border:2px solid #dcdde3;border-radius:5px"></div>
<svg style="left:1361px;top:677.1px" width="32" height="32" viewBox="0 0 32 32"><circle cx="16" cy="16" r="16" fill="#5f7ff5"/><g fill="none" stroke="#fff" stroke-width="1.9" stroke-linejoin="round"><path d="M5.9 13.4 L15.8 5.3 L26.9 13.4"/><path d="M8.8 14.5 L17 7.8 L26.9 17"/><path d="M12.3 16.3 L17.3 12 L21.5 15.5 L16 19.5"/><path d="M5.3 16 L14.8 23 L22.8 17.3"/><path d="M5.3 19.5 L15.8 27.4 L26.3 19.8"/></g></svg>
<div class="t" style="left:1402px;top:675.9px;font-size:28px;line-height:39px;color:#1677ff;font-weight:400;;-webkit-text-stroke:0.6px #1677ff">测试系列</div>
<div class="t" style="left:1361px;top:734.4px;font-size:28px;line-height:39px;color:#272a30;font-weight:400;">ID:4<svg width="25" height="16" viewBox="0 0 25 16" style="position:relative;display:inline-block;vertical-align:middle;top:-2px;margin:0 9px 0 9px"><path d="M0.5 8 H23.5 M16.5 1 L23.5 8 L16.5 15" fill="none" stroke="#272a30" stroke-width="2.2"/></svg>测试100G30天套餐#4</div>
<div class="r" style="left:1823px;top:698px;width:56px;height:56px;background:#e0ebf7;border-radius:6px"></div>
<div class="t" style="left:1823px;top:707.9px;font-size:26px;line-height:36px;color:#1b6ac9;font-weight:400;width:56px;text-align:center">否</div>
<div class="t" style="left:2055px;top:705.4px;font-size:28px;line-height:39px;color:#272a30;font-weight:400;">100.00</div>
<div class="t" style="left:2287px;top:705.4px;font-size:28px;line-height:39px;color:#272a30;font-weight:400;">60.00</div>
<div class="t" style="left:2518px;top:705.4px;font-size:28px;line-height:39px;color:#272a30;font-weight:400;">45</div>
<div class="t" style="left:2749px;top:662.9px;font-size:28px;line-height:39px;color:#272a30;font-weight:400;">+15 (15.00)</div>
<div class="r" style="left:3051px;top:662px;width:96px;height:56px;background:#d9e6f6;border-radius:8px"></div>
<div class="t" style="left:3071px;top:668.4px;font-size:28px;line-height:39px;color:#0a60c2;font-weight:400;">保存</div>
<div class="r" style="left:2749px;top:734px;width:398px;height:54px;background:#fff;border:2px solid #dcdde3;border-radius:8px"></div>
<div class="r" style="left:2946px;top:734px;width:2px;height:54px;background:#dcdde3;"></div>
<div class="t" style="left:2774px;top:740.4px;font-size:28px;line-height:39px;color:#272a30;font-weight:400;">固定值</div>
<svg style="left:2905px;top:756.1px" width="20" height="11" viewBox="0 0 20 11"><path d="M1.5 1.5 L10 9.5 L18.5 1.5" fill="none" stroke="rgba(0,0,0,0.3)" stroke-width="2"/></svg>
<div class="t" style="left:2968px;top:740.4px;font-size:28px;line-height:39px;color:#272a30;font-weight:400;">15</div>
<div class="t" style="left:3104px;top:740.4px;font-size:28px;line-height:39px;color:#272a30;font-weight:400;">元</div>
<div class="r" style="left:3212px;top:704px;width:80px;height:45px;background:#0a60c2;border-radius:23px"></div>
<div class="r" style="left:3251px;top:708.1px;width:37px;height:37px;border-radius:50%;background:#fff"></div>
<div class="t" style="left:3443px;top:705.4px;font-size:28px;line-height:39px;color:#272a30;font-weight:400;letter-spacing:0.7px">2025-01-19 17:49:10</div>
<div class="r" style="left:1244px;top:992px;width:2521px;height:2px;background:#ebebf2;"></div>
<div class="r" style="left:1275px;top:888px;width:31px;height:31px;background:#fff;border:2px solid #dcdde3;border-radius:5px"></div>
<svg style="left:1361px;top:855.3px" width="32" height="32" viewBox="0 0 32 32"><circle cx="16" cy="16" r="16" fill="#5f7ff5"/><g fill="none" stroke="#fff" stroke-width="1.9" stroke-linejoin="round"><path d="M5.9 13.4 L15.8 5.3 L26.9 13.4"/><path d="M8.8 14.5 L17 7.8 L26.9 17"/><path d="M12.3 16.3 L17.3 12 L21.5 15.5 L16 19.5"/><path d="M5.3 16 L14.8 23 L22.8 17.3"/><path d="M5.3 19.5 L15.8 27.4 L26.3 19.8"/></g></svg>
<div class="t" style="left:1402px;top:854.1px;font-size:28px;line-height:39px;color:#1677ff;font-weight:400;;-webkit-text-stroke:0.6px #1677ff">测试系列</div>
<div class="t" style="left:1361px;top:912.6px;font-size:28px;line-height:39px;color:#272a30;font-weight:400;">ID:2<svg width="25" height="16" viewBox="0 0 25 16" style="position:relative;display:inline-block;vertical-align:middle;top:-2px;margin:0 9px 0 9px"><path d="M0.5 8 H23.5 M16.5 1 L23.5 8 L16.5 15" fill="none" stroke="#272a30" stroke-width="2.2"/></svg>测试200G30天套餐</div>
<div class="r" style="left:1823px;top:876px;width:56px;height:56px;background:#e0ebf7;border-radius:6px"></div>
<div class="t" style="left:1823px;top:886.1px;font-size:26px;line-height:36px;color:#1b6ac9;font-weight:400;width:56px;text-align:center">否</div>
<div class="t" style="left:2055px;top:883.6px;font-size:28px;line-height:39px;color:#272a30;font-weight:400;">29.00</div>
<div class="t" style="left:2287px;top:883.6px;font-size:28px;line-height:39px;color:#272a30;font-weight:400;">23.00</div>
<div class="t" style="left:2518px;top:883.6px;font-size:28px;line-height:39px;color:#272a30;font-weight:400;">12</div>
<div class="t" style="left:2749px;top:841.1px;font-size:28px;line-height:39px;color:#272a30;font-weight:400;">+11 (11.00)</div>
<div class="r" style="left:3051px;top:840px;width:96px;height:56px;background:#d9e6f6;border-radius:8px"></div>
<div class="t" style="left:3071px;top:846.6px;font-size:28px;line-height:39px;color:#0a60c2;font-weight:400;">保存</div>
<div class="r" style="left:2749px;top:912px;width:398px;height:54px;background:#fff;border:2px solid #dcdde3;border-radius:8px"></div>
<div class="r" style="left:2946px;top:912px;width:2px;height:54px;background:#dcdde3;"></div>
<div class="t" style="left:2774px;top:918.6px;font-size:28px;line-height:39px;color:#272a30;font-weight:400;">固定值</div>
<svg style="left:2905px;top:934.3px" width="20" height="11" viewBox="0 0 20 11"><path d="M1.5 1.5 L10 9.5 L18.5 1.5" fill="none" stroke="rgba(0,0,0,0.3)" stroke-width="2"/></svg>
<div class="t" style="left:2968px;top:918.6px;font-size:28px;line-height:39px;color:#272a30;font-weight:400;">11</div>
<div class="t" style="left:3104px;top:918.6px;font-size:28px;line-height:39px;color:#272a30;font-weight:400;">元</div>
<div class="r" style="left:3212px;top:882px;width:80px;height:45px;background:#0a60c2;border-radius:23px"></div>
<div class="r" style="left:3251px;top:886.3px;width:37px;height:37px;border-radius:50%;background:#fff"></div>
<div class="t" style="left:3443px;top:883.6px;font-size:28px;line-height:39px;color:#272a30;font-weight:400;letter-spacing:0.7px">2024-12-26 00:16:59</div>
<div class="r" style="left:1244px;top:1171px;width:2521px;height:2px;background:#ebebf2;"></div>
<div class="r" style="left:1275px;top:1066px;width:31px;height:31px;background:#fff;border:2px solid #dcdde3;border-radius:5px"></div>
<svg style="left:1361px;top:1033.4px" width="32" height="32" viewBox="0 0 32 32"><circle cx="16" cy="16" r="16" fill="#5f7ff5"/><g fill="none" stroke="#fff" stroke-width="1.9" stroke-linejoin="round"><path d="M5.9 13.4 L15.8 5.3 L26.9 13.4"/><path d="M8.8 14.5 L17 7.8 L26.9 17"/><path d="M12.3 16.3 L17.3 12 L21.5 15.5 L16 19.5"/><path d="M5.3 16 L14.8 23 L22.8 17.3"/><path d="M5.3 19.5 L15.8 27.4 L26.3 19.8"/></g></svg>
<div class="t" style="left:1402px;top:1032.2px;font-size:28px;line-height:39px;color:#1677ff;font-weight:400;;-webkit-text-stroke:0.6px #1677ff">测试系列</div>
<div class="t" style="left:1361px;top:1090.7px;font-size:28px;line-height:39px;color:#272a30;font-weight:400;">ID:1<svg width="25" height="16" viewBox="0 0 25 16" style="position:relative;display:inline-block;vertical-align:middle;top:-2px;margin:0 9px 0 9px"><path d="M0.5 8 H23.5 M16.5 1 L23.5 8 L16.5 15" fill="none" stroke="#272a30" stroke-width="2.2"/></svg>测试100G30天套餐</div>
<div class="r" style="left:1823px;top:1054px;width:56px;height:56px;background:#e0ebf7;border-radius:6px"></div>
<div class="t" style="left:1823px;top:1064.2px;font-size:26px;line-height:36px;color:#1b6ac9;font-weight:400;width:56px;text-align:center">否</div>
<div class="t" style="left:2055px;top:1061.7px;font-size:28px;line-height:39px;color:#272a30;font-weight:400;">29.00</div>
<div class="t" style="left:2287px;top:1061.7px;font-size:28px;line-height:39px;color:#272a30;font-weight:400;">23.00</div>
<div class="t" style="left:2518px;top:1061.7px;font-size:28px;line-height:39px;color:#272a30;font-weight:400;">12</div>
<div class="t" style="left:2749px;top:1019.2px;font-size:28px;line-height:39px;color:#272a30;font-weight:400;">+11 (11.00)</div>
<div class="r" style="left:3051px;top:1018px;width:96px;height:56px;background:#d9e6f6;border-radius:8px"></div>
<div class="t" style="left:3071px;top:1024.7px;font-size:28px;line-height:39px;color:#0a60c2;font-weight:400;">保存</div>
<div class="r" style="left:2749px;top:1090px;width:398px;height:54px;background:#fff;border:2px solid #dcdde3;border-radius:8px"></div>
<div class="r" style="left:2946px;top:1090px;width:2px;height:54px;background:#dcdde3;"></div>
<div class="t" style="left:2774px;top:1096.7px;font-size:28px;line-height:39px;color:#272a30;font-weight:400;">固定值</div>
<svg style="left:2905px;top:1112.4px" width="20" height="11" viewBox="0 0 20 11"><path d="M1.5 1.5 L10 9.5 L18.5 1.5" fill="none" stroke="rgba(0,0,0,0.3)" stroke-width="2"/></svg>
<div class="t" style="left:2968px;top:1096.7px;font-size:28px;line-height:39px;color:#272a30;font-weight:400;">11</div>
<div class="t" style="left:3104px;top:1096.7px;font-size:28px;line-height:39px;color:#272a30;font-weight:400;">元</div>
<div class="r" style="left:3212px;top:1060px;width:80px;height:45px;background:#0a60c2;border-radius:23px"></div>
<div class="r" style="left:3251px;top:1064.4px;width:37px;height:37px;border-radius:50%;background:#fff"></div>
<div class="t" style="left:3443px;top:1061.7px;font-size:28px;line-height:39px;color:#272a30;font-weight:400;letter-spacing:0.7px">2024-12-26 00:16:59</div>
<div class="r" style="left:1244px;top:1349px;width:2521px;height:2px;background:#ebebf2;"></div>
<div class="r" style="left:1275px;top:1244px;width:31px;height:31px;background:#fff;border:2px solid #dcdde3;border-radius:5px"></div>
<svg style="left:1361px;top:1211.6px" width="32" height="32" viewBox="0 0 32 32"><circle cx="16" cy="16" r="16" fill="#c4261d"/><g fill="none" stroke="#fff" stroke-width="1.8"><circle cx="13" cy="9" r="3"/><circle cx="19" cy="9" r="3"/><circle cx="13" cy="23" r="3"/><circle cx="19" cy="23" r="3"/><circle cx="7" cy="16" r="3"/><circle cx="25" cy="16" r="3"/><path d="M10 16 H22 M13 12 L19 20 M19 12 L13 20"/></g></svg>
<div class="t" style="left:1402px;top:1210.4px;font-size:28px;line-height:39px;color:#1677ff;font-weight:400;;-webkit-text-stroke:0.6px #1677ff">测试联通系列</div>
<div class="t" style="left:1361px;top:1268.9px;font-size:28px;line-height:39px;color:#272a30;font-weight:400;">ID:6<svg width="25" height="16" viewBox="0 0 25 16" style="position:relative;display:inline-block;vertical-align:middle;top:-2px;margin:0 9px 0 9px"><path d="M0.5 8 H23.5 M16.5 1 L23.5 8 L16.5 15" fill="none" stroke="#272a30" stroke-width="2.2"/></svg>测试50G30天套餐</div>
<div class="r" style="left:1823px;top:1232px;width:56px;height:56px;background:#e0ebf7;border-radius:6px"></div>
<div class="t" style="left:1823px;top:1242.4px;font-size:26px;line-height:36px;color:#1b6ac9;font-weight:400;width:56px;text-align:center">否</div>
<div class="t" style="left:2055px;top:1239.9px;font-size:28px;line-height:39px;color:#272a30;font-weight:400;">200.00</div>
<div class="t" style="left:2287px;top:1239.9px;font-size:28px;line-height:39px;color:#272a30;font-weight:400;">111.00</div>
<div class="t" style="left:2518px;top:1239.9px;font-size:28px;line-height:39px;color:#272a30;font-weight:400;">100</div>
<div class="t" style="left:2749px;top:1197.4px;font-size:28px;line-height:39px;color:#272a30;font-weight:400;">+11 (11.00)</div>
<div class="r" style="left:3051px;top:1196px;width:96px;height:56px;background:#d9e6f6;border-radius:8px"></div>
<div class="t" style="left:3071px;top:1202.9px;font-size:28px;line-height:39px;color:#0a60c2;font-weight:400;">保存</div>
<div class="r" style="left:2749px;top:1269px;width:398px;height:54px;background:#fff;border:2px solid #dcdde3;border-radius:8px"></div>
<div class="r" style="left:2946px;top:1269px;width:2px;height:54px;background:#dcdde3;"></div>
<div class="t" style="left:2774px;top:1274.9px;font-size:28px;line-height:39px;color:#272a30;font-weight:400;">固定值</div>
<svg style="left:2905px;top:1290.6px" width="20" height="11" viewBox="0 0 20 11"><path d="M1.5 1.5 L10 9.5 L18.5 1.5" fill="none" stroke="rgba(0,0,0,0.3)" stroke-width="2"/></svg>
<div class="t" style="left:2968px;top:1274.9px;font-size:28px;line-height:39px;color:#272a30;font-weight:400;">11</div>
<div class="t" style="left:3104px;top:1274.9px;font-size:28px;line-height:39px;color:#272a30;font-weight:400;">元</div>
<div class="r" style="left:3212px;top:1239px;width:80px;height:45px;background:#0a60c2;border-radius:23px"></div>
<div class="r" style="left:3251px;top:1242.6px;width:37px;height:37px;border-radius:50%;background:#fff"></div>
<div class="t" style="left:3443px;top:1239.9px;font-size:28px;line-height:39px;color:#272a30;font-weight:400;letter-spacing:0.7px">2024-12-26 00:16:59</div>
<div class="r" style="left:1244px;top:1527px;width:2521px;height:2px;background:#ebebf2;"></div>
<div class="r" style="left:1275px;top:1422px;width:31px;height:31px;background:#fff;border:2px solid #dcdde3;border-radius:5px"></div>
<svg style="left:1361px;top:1389.7px" width="32" height="32" viewBox="0 0 32 32"><circle cx="16" cy="16" r="16" fill="#c4261d"/><g fill="none" stroke="#fff" stroke-width="1.8"><circle cx="13" cy="9" r="3"/><circle cx="19" cy="9" r="3"/><circle cx="13" cy="23" r="3"/><circle cx="19" cy="23" r="3"/><circle cx="7" cy="16" r="3"/><circle cx="25" cy="16" r="3"/><path d="M10 16 H22 M13 12 L19 20 M19 12 L13 20"/></g></svg>
<div class="t" style="left:1402px;top:1388.5px;font-size:28px;line-height:39px;color:#1677ff;font-weight:400;;-webkit-text-stroke:0.6px #1677ff">测试联通系列</div>
<div class="t" style="left:1361px;top:1447.0px;font-size:28px;line-height:39px;color:#272a30;font-weight:400;">ID:7<svg width="25" height="16" viewBox="0 0 25 16" style="position:relative;display:inline-block;vertical-align:middle;top:-2px;margin:0 9px 0 9px"><path d="M0.5 8 H23.5 M16.5 1 L23.5 8 L16.5 15" fill="none" stroke="#272a30" stroke-width="2.2"/></svg>联通80G</div>
<div class="r" style="left:1823px;top:1410px;width:56px;height:56px;background:#e0ebf7;border-radius:6px"></div>
<div class="t" style="left:1823px;top:1420.5px;font-size:26px;line-height:36px;color:#1b6ac9;font-weight:400;width:56px;text-align:center">否</div>
<div class="t" style="left:2055px;top:1418.0px;font-size:28px;line-height:39px;color:#272a30;font-weight:400;">39.00</div>
<div class="t" style="left:2287px;top:1418.0px;font-size:28px;line-height:39px;color:#272a30;font-weight:400;">27.00</div>
<div class="t" style="left:2518px;top:1418.0px;font-size:28px;line-height:39px;color:#272a30;font-weight:400;">16</div>
<div class="t" style="left:2749px;top:1375.5px;font-size:28px;line-height:39px;color:#272a30;font-weight:400;">+11 (11.00)</div>
<div class="r" style="left:3051px;top:1374px;width:96px;height:56px;background:#d9e6f6;border-radius:8px"></div>
<div class="t" style="left:3071px;top:1381.0px;font-size:28px;line-height:39px;color:#0a60c2;font-weight:400;">保存</div>
<div class="r" style="left:2749px;top:1447px;width:398px;height:54px;background:#fff;border:2px solid #dcdde3;border-radius:8px"></div>
<div class="r" style="left:2946px;top:1447px;width:2px;height:54px;background:#dcdde3;"></div>
<div class="t" style="left:2774px;top:1453.0px;font-size:28px;line-height:39px;color:#272a30;font-weight:400;">固定值</div>
<svg style="left:2905px;top:1468.7px" width="20" height="11" viewBox="0 0 20 11"><path d="M1.5 1.5 L10 9.5 L18.5 1.5" fill="none" stroke="rgba(0,0,0,0.3)" stroke-width="2"/></svg>
<div class="t" style="left:2968px;top:1453.0px;font-size:28px;line-height:39px;color:#272a30;font-weight:400;">11</div>
<div class="t" style="left:3104px;top:1453.0px;font-size:28px;line-height:39px;color:#272a30;font-weight:400;">元</div>
<div class="r" style="left:3212px;top:1417px;width:80px;height:45px;background:#0a60c2;border-radius:23px"></div>
<div class="r" style="left:3251px;top:1420.7px;width:37px;height:37px;border-radius:50%;background:#fff"></div>
<div class="t" style="left:3443px;top:1418.0px;font-size:28px;line-height:39px;color:#272a30;font-weight:400;letter-spacing:0.7px">2024-12-26 00:16:59</div>
<div class="r" style="left:1244px;top:1705px;width:2521px;height:2px;background:#ebebf2;"></div>
<div class="r" style="left:1275px;top:1600px;width:31px;height:31px;background:#fff;border:2px solid #dcdde3;border-radius:5px"></div>
<svg style="left:1361px;top:1567.8px" width="32" height="32" viewBox="0 0 32 32"><circle cx="16" cy="16" r="16" fill="#c4261d"/><g fill="none" stroke="#fff" stroke-width="1.8"><circle cx="13" cy="9" r="3"/><circle cx="19" cy="9" r="3"/><circle cx="13" cy="23" r="3"/><circle cx="19" cy="23" r="3"/><circle cx="7" cy="16" r="3"/><circle cx="25" cy="16" r="3"/><path d="M10 16 H22 M13 12 L19 20 M19 12 L13 20"/></g></svg>
<div class="t" style="left:1402px;top:1566.6px;font-size:28px;line-height:39px;color:#1677ff;font-weight:400;;-webkit-text-stroke:0.6px #1677ff">测试联通系列</div>
<div class="t" style="left:1361px;top:1625.1px;font-size:28px;line-height:39px;color:#272a30;font-weight:400;">ID:8<svg width="25" height="16" viewBox="0 0 25 16" style="position:relative;display:inline-block;vertical-align:middle;top:-2px;margin:0 9px 0 9px"><path d="M0.5 8 H23.5 M16.5 1 L23.5 8 L16.5 15" fill="none" stroke="#272a30" stroke-width="2.2"/></svg>联通30G</div>
<div class="r" style="left:1823px;top:1588px;width:56px;height:56px;background:#e0ebf7;border-radius:6px"></div>
<div class="t" style="left:1823px;top:1598.6px;font-size:26px;line-height:36px;color:#1b6ac9;font-weight:400;width:56px;text-align:center">否</div>
<div class="t" style="left:2055px;top:1596.1px;font-size:28px;line-height:39px;color:#272a30;font-weight:400;">0.00</div>
<div class="t" style="left:2287px;top:1596.1px;font-size:28px;line-height:39px;color:#272a30;font-weight:400;">11.00</div>
<div class="t" style="left:2518px;top:1596.1px;font-size:28px;line-height:39px;color:#272a30;font-weight:400;">0</div>
<div class="t" style="left:2749px;top:1553.6px;font-size:28px;line-height:39px;color:#272a30;font-weight:400;">+11 (11.00)</div>
<div class="r" style="left:3051px;top:1552px;width:96px;height:56px;background:#d9e6f6;border-radius:8px"></div>
<div class="t" style="left:3071px;top:1559.1px;font-size:28px;line-height:39px;color:#0a60c2;font-weight:400;">保存</div>
<div class="r" style="left:2749px;top:1625px;width:398px;height:54px;background:#fff;border:2px solid #dcdde3;border-radius:8px"></div>
<div class="r" style="left:2946px;top:1625px;width:2px;height:54px;background:#dcdde3;"></div>
<div class="t" style="left:2774px;top:1631.1px;font-size:28px;line-height:39px;color:#272a30;font-weight:400;">固定值</div>
<svg style="left:2905px;top:1646.8px" width="20" height="11" viewBox="0 0 20 11"><path d="M1.5 1.5 L10 9.5 L18.5 1.5" fill="none" stroke="rgba(0,0,0,0.3)" stroke-width="2"/></svg>
<div class="t" style="left:2968px;top:1631.1px;font-size:28px;line-height:39px;color:#272a30;font-weight:400;">11</div>
<div class="t" style="left:3104px;top:1631.1px;font-size:28px;line-height:39px;color:#272a30;font-weight:400;">元</div>
<div class="r" style="left:3212px;top:1595px;width:80px;height:45px;background:#0a60c2;border-radius:23px"></div>
<div class="r" style="left:3251px;top:1598.8px;width:37px;height:37px;border-radius:50%;background:#fff"></div>
<div class="t" style="left:3443px;top:1596.1px;font-size:28px;line-height:39px;color:#272a30;font-weight:400;letter-spacing:0.7px">2024-12-26 00:16:59</div>
<div class="r" style="left:1244px;top:1883px;width:2521px;height:2px;background:#ebebf2;"></div>
<div class="r" style="left:1275px;top:1778px;width:31px;height:31px;background:#fff;border:2px solid #dcdde3;border-radius:5px"></div>
<svg style="left:1361px;top:1746.0px" width="32" height="32" viewBox="0 0 32 32"><circle cx="16" cy="16" r="16" fill="#c4261d"/><g fill="none" stroke="#fff" stroke-width="1.8"><circle cx="13" cy="9" r="3"/><circle cx="19" cy="9" r="3"/><circle cx="13" cy="23" r="3"/><circle cx="19" cy="23" r="3"/><circle cx="7" cy="16" r="3"/><circle cx="25" cy="16" r="3"/><path d="M10 16 H22 M13 12 L19 20 M19 12 L13 20"/></g></svg>
<div class="t" style="left:1402px;top:1744.8px;font-size:28px;line-height:39px;color:#1677ff;font-weight:400;;-webkit-text-stroke:0.6px #1677ff">测试联通系列</div>
<div class="t" style="left:1361px;top:1803.3px;font-size:28px;line-height:39px;color:#272a30;font-weight:400;">ID:9<svg width="25" height="16" viewBox="0 0 25 16" style="position:relative;display:inline-block;vertical-align:middle;top:-2px;margin:0 9px 0 9px"><path d="M0.5 8 H23.5 M16.5 1 L23.5 8 L16.5 15" fill="none" stroke="#272a30" stroke-width="2.2"/></svg>联通30G</div>
<div class="r" style="left:1823px;top:1766px;width:56px;height:56px;background:#e0ebf7;border-radius:6px"></div>
<div class="t" style="left:1823px;top:1776.8px;font-size:26px;line-height:36px;color:#1b6ac9;font-weight:400;width:56px;text-align:center">否</div>
<div class="t" style="left:2055px;top:1774.3px;font-size:28px;line-height:39px;color:#272a30;font-weight:400;">0.00</div>
<div class="t" style="left:2287px;top:1774.3px;font-size:28px;line-height:39px;color:#272a30;font-weight:400;">11.00</div>
<div class="t" style="left:2518px;top:1774.3px;font-size:28px;line-height:39px;color:#272a30;font-weight:400;">0</div>
<div class="t" style="left:2749px;top:1731.8px;font-size:28px;line-height:39px;color:#272a30;font-weight:400;">+11 (11.00)</div>
<div class="r" style="left:3051px;top:1730px;width:96px;height:56px;background:#d9e6f6;border-radius:8px"></div>
<div class="t" style="left:3071px;top:1737.3px;font-size:28px;line-height:39px;color:#0a60c2;font-weight:400;">保存</div>
<div class="r" style="left:2749px;top:1803px;width:398px;height:54px;background:#fff;border:2px solid #dcdde3;border-radius:8px"></div>
<div class="r" style="left:2946px;top:1803px;width:2px;height:54px;background:#dcdde3;"></div>
<div class="t" style="left:2774px;top:1809.3px;font-size:28px;line-height:39px;color:#272a30;font-weight:400;">固定值</div>
<svg style="left:2905px;top:1825.0px" width="20" height="11" viewBox="0 0 20 11"><path d="M1.5 1.5 L10 9.5 L18.5 1.5" fill="none" stroke="rgba(0,0,0,0.3)" stroke-width="2"/></svg>
<div class="t" style="left:2968px;top:1809.3px;font-size:28px;line-height:39px;color:#272a30;font-weight:400;">11</div>
<div class="t" style="left:3104px;top:1809.3px;font-size:28px;line-height:39px;color:#272a30;font-weight:400;">元</div>
<div class="r" style="left:3212px;top:1773px;width:80px;height:45px;background:#0a60c2;border-radius:23px"></div>
<div class="r" style="left:3251px;top:1777.0px;width:37px;height:37px;border-radius:50%;background:#fff"></div>
<div class="t" style="left:3443px;top:1774.3px;font-size:28px;line-height:39px;color:#272a30;font-weight:400;letter-spacing:0.7px">2024-12-26 00:16:59</div>
<svg style="left:0;top:0" width="3832" height="1736" viewBox="0 0 3832 1736">
<polygon fill="#fec13d" points="184,1251 198,783 175.5,781 225.7,708 265,788 243,787"/>
<polygon fill="#fec13d" points="892,855 1179.3,160 1159.1,150.3 1231.6,98 1240.9,187.2 1220.5,178.3 896,856"/>
<polygon fill="#fec13d" points="642,776.5 822,929.7 833.3,918.4 851.8,982 788,965.7 799.4,954.3"/>
</svg>
<svg style="left:0;top:1712px" width="24" height="24" viewBox="0 0 24 24"><path d="M0 0 A24 24 0 0 0 24 24 L0 24 Z" fill="#222"/></svg>
<svg style="left:3808px;top:1712px" width="24" height="24" viewBox="0 0 24 24"><path d="M24 0 A24 24 0 0 1 0 24 L24 24 Z" fill="#222"/></svg>
</body></html>
